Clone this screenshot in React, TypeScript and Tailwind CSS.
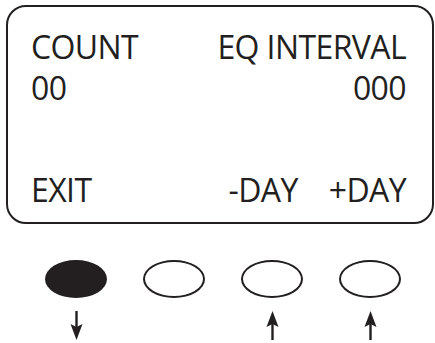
const Arrow = ({ up }: { up?: boolean }) => (
  <svg width="13" height="29" viewBox="0 0 13 29" className={up ? '' : 'rotate-180'}>
    <path d="M6.5 0 L12.5 16 L6.5 13 L0.5 16 Z" fill="#231f20" />
    <line x1="6.5" y1="11" x2="6.5" y2="29" stroke="#231f20" strokeWidth="2.4" />
  </svg>
);

function Key({ filled, arrow }: { filled?: boolean; arrow?: 'up' | 'down' }) {
  return (
    <div className="flex flex-col items-center">
      <div
        className={`w-[62px] h-[38px] rounded-[50%] border-[2.5px] border-[#231f20] ${filled ? 'bg-[#231f20]' : 'bg-white'}`}
      />
      <div className="h-[29px] mt-[13px]">{arrow && <Arrow up={arrow === 'up'} />}</div>
    </div>
  );
}

export default function App() {
  return (
    <div className="w-[435px] h-[343px] bg-white text-[#231f20] font-['Open_Sans',sans-serif] overflow-hidden">
      <div className="ml-[6px] mt-[5px] w-[428px] h-[219px] border-2 border-[#231f20] rounded-[20px] flex flex-col pl-[23px] pr-[26px] pt-[19px] text-[32px] leading-[41px] tracking-[-0.6px]">
        <div className="flex justify-between">
          <span>COUNT</span>
          <span>EQ INTERVAL</span>
        </div>
        <div className="flex justify-between">
          <span>00</span>
          <span>000</span>
        </div>
        <div className="flex justify-between mt-auto mb-[12px]">
          <span>EXIT</span>
          <div className="flex gap-[31px]">
            <span>-DAY</span>
            <span>+DAY</span>
          </div>
        </div>
      </div>
      <div className="grid grid-cols-4 w-[392px] ml-[27px] mt-[36px]">
        <Key filled arrow="down" />
        <Key />
        <Key arrow="up" />
        <Key arrow="up" />
      </div>
    </div>
  );
}
